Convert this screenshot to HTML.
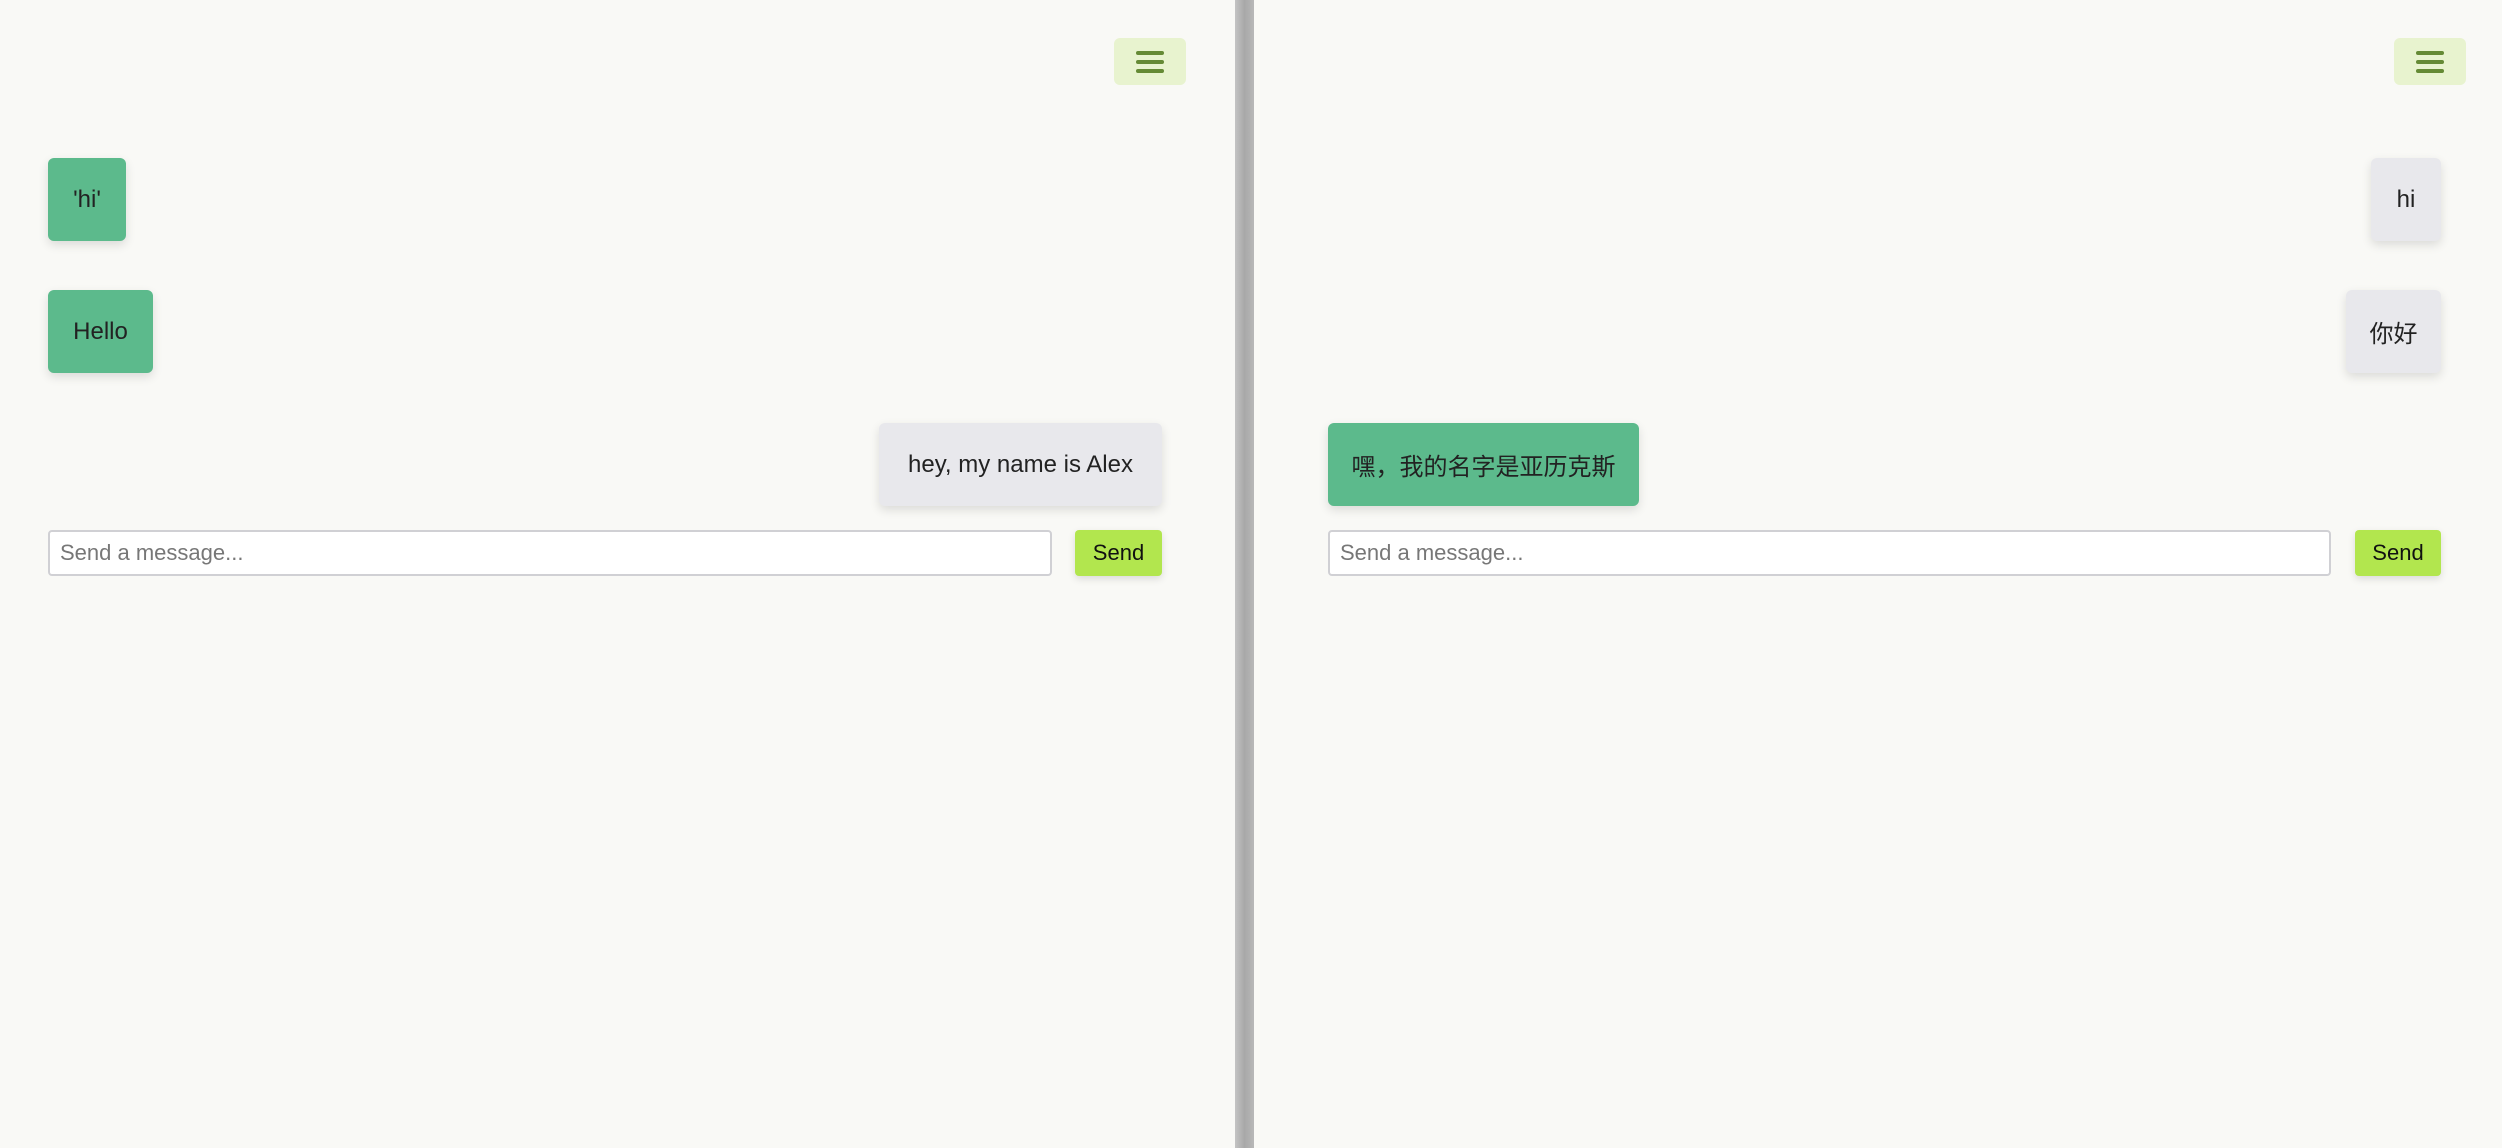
<!DOCTYPE html>
<html><head><meta charset="utf-8"><style>
html,body{margin:0;padding:0;width:2502px;height:1148px;overflow:hidden;background:#f9f9f6;font-family:"Liberation Sans","Noto Sans CJK SC",sans-serif;}
.a{position:absolute;box-sizing:border-box;}
.b{border-radius:6px;font-size:24px;color:#222;display:flex;align-items:center;justify-content:center;box-shadow:0 4px 10px rgba(0,0,0,0.12);}
.g{background:#5cba8c;}
.w{background:#e8e8ec;}
.ham{background:#e8f3cf;border-radius:6px;}
.ham i{position:absolute;left:22px;width:28px;height:4px;border-radius:2px;background:#658a35;}
.in{background:#fff;border:2px solid #d0d0d4;border-radius:4px;font-size:22px;color:#777;padding-left:10px;display:flex;align-items:center;}
.send{background:#b2e64e;border-radius:4px;font-size:22px;color:#111;display:flex;align-items:center;justify-content:center;box-shadow:0 3px 8px rgba(0,0,0,0.12);}
</style></head><body>
<div class="a" style="left:1235px;top:0;width:19px;height:1148px;background:linear-gradient(to right,#c4c4c4,#a8a8a8 50%,#b8b8b8);"></div>

<div class="a ham" style="left:1114px;top:38px;width:72px;height:47px;"><i style="top:13px"></i><i style="top:22px"></i><i style="top:31px"></i></div>
<div class="a b g" style="left:48px;top:158px;width:78px;height:83px;">'hi'</div>
<div class="a b g" style="left:48px;top:290px;width:105px;height:83px;">Hello</div>
<div class="a b w" style="left:879px;top:423px;width:283px;height:83px;">hey, my name is Alex</div>
<div class="a in" style="left:48px;top:530px;width:1004px;height:46px;">Send a message...</div>
<div class="a send" style="left:1075px;top:530px;width:87px;height:46px;">Send</div>

<div class="a ham" style="left:2394px;top:38px;width:72px;height:47px;"><i style="top:13px"></i><i style="top:22px"></i><i style="top:31px"></i></div>
<div class="a b w" style="left:2371px;top:158px;width:70px;height:83px;">hi</div>
<div class="a b w" style="left:2346px;top:290px;width:95px;height:83px;">你好</div>
<div class="a b g" style="left:1328px;top:423px;width:311px;height:83px;">嘿，我的名字是亚历克斯</div>
<div class="a in" style="left:1328px;top:530px;width:1003px;height:46px;">Send a message...</div>
<div class="a send" style="left:2355px;top:530px;width:86px;height:46px;">Send</div>
</body></html>
